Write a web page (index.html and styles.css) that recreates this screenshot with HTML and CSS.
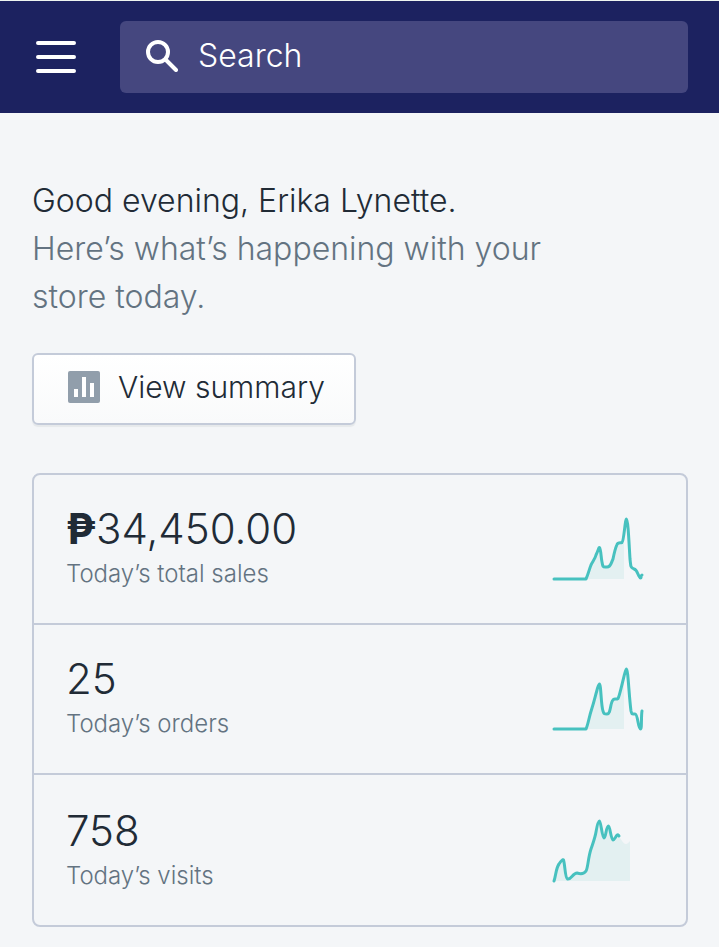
FILE: index.html
```html
<!DOCTYPE html>
<html lang="en">

<head>
    <meta charset="UTF-8">
    <meta name="viewport" content="width=device-width, initial-scale=1">
    <title>Home</title>
    <link rel="stylesheet" href="styles.css">
</head>

<body>
    <header class="topbar">
        <button type="button" class="menu" aria-label="Menu">
            <svg width="40" height="32" viewBox="0 0 40 32" fill="none" stroke="#fff" stroke-width="4" stroke-linecap="round">
                <path d="M2 2h36M2 16h36M2 30h36" />
            </svg>
        </button>
        <form class="search">
            <label for="search" aria-label="Search">
                <svg width="32" height="32" viewBox="0 0 32 32" fill="none" stroke="#fff" stroke-width="4" stroke-linecap="round">
                    <circle cx="12" cy="12" r="10" />
                    <path d="M20 20l10 10" />
                </svg>
            </label>
            <input type="search" id="search" placeholder="Search">
        </form>
    </header>

    <main class="content">
        <h1 class="greeting">Good evening, Erika Lynette.</h1>
        <p class="intro">Here’s what’s happening with your store today.</p>

        <button type="button" class="summary">
            <svg width="32" height="32" viewBox="0 0 32 32">
                <rect width="32" height="32" rx="2" fill="#919eab" />
                <path d="M6 18h4v8H6zM14 6h4v20h-4zM22 12h4v14h-4z" fill="#fff" />
            </svg>
            View summary
        </button>

        <div class="stats">
            <a href="#sales" class="stat">
                <span class="info">
                    <span class="value"><span class="currency">₱</span>34,450.00</span>
                    <span class="label">Today’s total sales</span>
                </span>
                <svg class="chart" viewBox="0 0 96 68">
                    <path class="area" d="M36 64C38 60 39 55 41 50C44 44 46 41 48 34C51 29 50 33 52 46C53 53 53 52 58 52C63 52 64 36 68 28H74V64Z" />
                    <path class="line" d="M4 64H36C38 60 39 55 41 50C43 46 45 44 46 40C48 36 49 32 49.500 32.500C51 34 51 43 52 47C53 53 53 52 57 52C61 52 61 48 63 44C64 39 65 34 67 29.500C68 27 70 28 72 27.500C74 26 75 4 76.500 4C78 4 79 28 80 44C81 54 81 52 84 54C88 55 87 60 90 62L92 60" />
                    <circle cx="90.500" cy="62.500" r="2" class="dot" />
                </svg>
            </a>
            <a href="#orders" class="stat">
                <span class="info">
                    <span class="value">25</span>
                    <span class="label">Today’s orders</span>
                </span>
                <svg class="chart" viewBox="0 0 96 68">
                    <path class="area" d="M36 64L42 43L49 19L53 46Q54 49 59 49L63 35Q69 35 72 22L74 17V64Z" />
                    <path class="line" d="M4 64H36C38 60 39 52 42 43C45 34 48 19 49.500 19C51 19 51 41 53 46C54 49 54 49 57 49C61 49 60 38 63 35C64 33 66 35 68 33.500C70 31 75 4 76.500 4C78 4 79 31 81 46C82 50 82 49 85 49C88 49 88 64 90.500 64C92 64 91 52 92 46" />
                </svg>
            </a>
            <a href="#visits" class="stat">
                <span class="info">
                    <span class="value">758</span>
                    <span class="label">Today’s visits</span>
                </span>
                <svg class="chart" viewBox="0 0 96 68">
                    <path class="area" d="M4 64C8 50 8 48 13 43C15 49 15 61 18 62C23 62 25 56 31 57C38 56 37 50 41 34C45 22 47 4 49 4L54 21L59 9L63 23L69 19C72 24 75 31 80 24V64Z" />
                    <path class="line" d="M4 64C6 58 6 51 9 47C11 44 13 42 13.500 43C15 47 15 61 17.500 62C21 63 23 56 27 56C30 57 34 57 36 54C38 51 38 41 41 32C43 26 45 21 46 15C47 9 48 4 49.500 4C51 4 52 21 54 21C56 21 56 9 58.500 9C60 9 61 23 63 23C65 23 67 15 69 19" />
                </svg>
            </a>
        </div>
    </main>
</body>

</html>
```
FILE: styles.css
```css
* {
    box-sizing: border-box;
}

body {
    margin: 0;
    background-color: #f4f6f8;
    color: #212b36;
    font-family: Inter, "Liberation Sans", sans-serif;
    font-weight: 300;
}

button,
input {
    font: inherit;
    color: inherit;
}

svg {
    display: block;
    flex: none;
}

.topbar {
    display: flex;
    align-items: center;
    gap: 44px;
    padding: 20px 31px 20px 36px;
    border-top: 1px solid #eef5f0;
    background-color: #1c2260;
}

.menu {
    padding: 0;
    border: none;
    background: none;
}

.search {
    flex: 1;
    min-width: 0;
    display: flex;
    align-items: center;
    gap: 20px;
    height: 72px;
    padding: 0 26px 3px;
    border-radius: 6px;
    background-color: #45477f;
    color: #fff;
}

.search input {
    flex: 1;
    min-width: 0;
    padding: 0;
    border: none;
    outline: none;
    background: none;
    font-size: 32px;
}

.search input::placeholder {
    color: #fff;
    opacity: 1;
}

.content {
    padding: 64px 31px 20px 32px;
}

.greeting,
.intro {
    max-width: 520px;
    margin: 0;
    font-size: 32px;
    font-weight: 300;
    line-height: 48px;
}

.intro {
    color: #637381;
}

.summary {
    display: flex;
    align-items: center;
    gap: 18px;
    height: 72px;
    margin: 32px 0 48px;
    padding: 0 29px 4px 34px;
    border: 2px solid #c4cbd9;
    border-radius: 6px;
    background: linear-gradient(#fff, #f9fafb);
    box-shadow: 0 2px 1px rgba(22, 29, 37, 0.06);
    font-size: 30px;
}

.stats {
    border: 2px solid #c4cbd9;
    border-radius: 8px;
}

.stat {
    display: flex;
    align-items: center;
    justify-content: space-between;
    height: 150px;
    padding: 0 40px 0 32px;
    color: inherit;
    text-decoration: none;
}

.stat + .stat {
    border-top: 2px solid #c4cbd9;
}

.stat:first-child {
    height: 148px;
}

.stat:last-child {
    height: 152px;
    padding-top: 2px;
}

.value,
.label {
    display: block;
}

.value {
    font-size: 42px;
    line-height: 50px;
}

.currency {
    font-weight: 700;
}

.label {
    color: #637381;
    font-size: 24px;
    line-height: 40px;
}

.chart {
    width: 96px;
    height: 68px;
}

.area {
    fill: #e3f0f1;
}

.line {
    fill: none;
    stroke: #47c1bf;
    stroke-width: 3;
    stroke-linecap: round;
    stroke-linejoin: round;
}

.dot {
    fill: #47c1bf;
}
```
